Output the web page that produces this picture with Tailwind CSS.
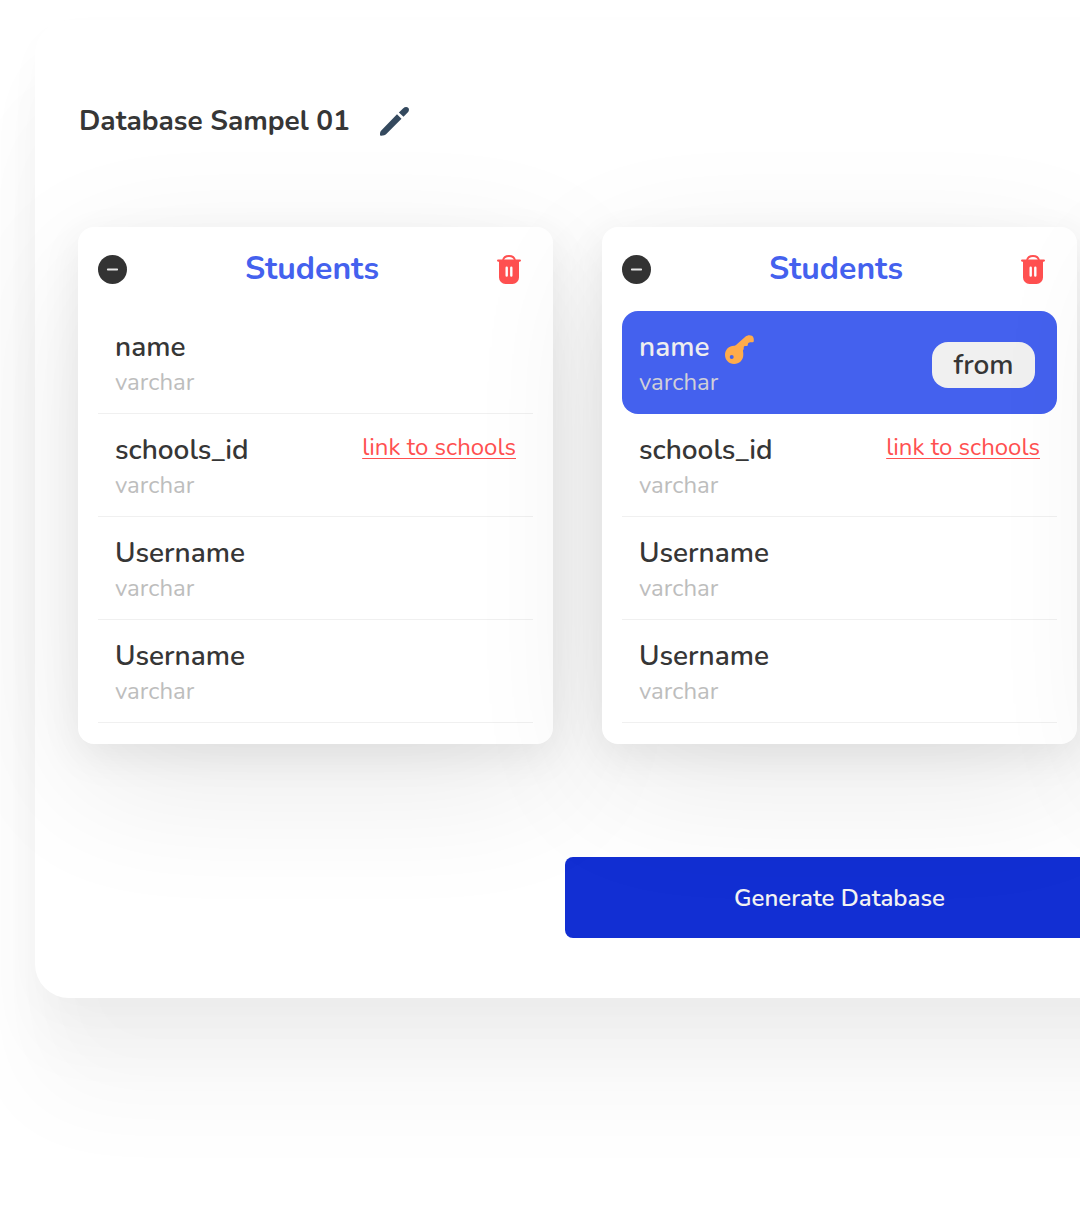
<!DOCTYPE html>
<html lang="en">
<head>
<meta charset="utf-8">
<meta name="viewport" content="width=device-width, initial-scale=1">
<title>Database Sampel 01</title>
<script src="https://cdn.jsdelivr.net/npm/@tailwindcss/browser@4"></script>
</head>
<body class="bg-white font-['Nunito','Lato',sans-serif] text-[#363636]">
<svg class="hidden" aria-hidden="true">
  <symbol id="minus" viewBox="0 0 28 28"><circle cx="14" cy="14" r="14" fill="#333"/><path d="M9.500 14h9" stroke="#e6e6e6" stroke-width="1.800" stroke-linecap="round"/></symbol>
  <symbol id="trash" viewBox="0 0 24 29"><path d="M6 5.500C6.500 2.500 9 1 12 1s5.500 1.500 6 4.500" fill="none" stroke="#ff5050" stroke-width="1.900"/><path d="M1.100 4.500h21.800a1.100 1.100 0 0 1 0 2.200H22V22.500a6.500 6.500 0 0 1-6.500 6.500h-7A6.500 6.500 0 0 1 2 22.500V6.700h-.9a1.100 1.100 0 0 1 0-2.200z" fill="#ff5050"/><path d="M9.700 12.800v7.700M14.300 12.800v7.700" stroke="#fff" stroke-width="2.400" stroke-linecap="round"/></symbol>
</svg>
<div class="overflow-x-hidden pt-5 pb-[232px] pl-[35px]">
  <main class="w-max rounded-[34px] bg-white px-[43px] pt-[81px] pb-[60px] shadow-[0_100px_100px_rgba(0,0,0,0.035),0_50px_60px_rgba(0,0,0,0.03),0_14px_40px_rgba(0,0,0,0.02)]">
    <header class="flex h-10 items-center gap-[30px] pl-px">
      <h1 class="text-[28px] leading-10 font-bold">Database Sampel 01</h1>
      <button type="button" aria-label="Rename database">
        <svg class="size-[29px]" viewBox="0 0 29 29" fill="#34495e"><path d="M17 7.300l4.500 4.400L6.300 27C5 28.300 3 28.800 0 28.600c-.1-2.700.2-4 1.500-5.300z"/><path d="M18.900 5.400L23 1.400C25 -.3 27.200-.2 28.400 1c.9 1.100.8 3-.7 4.500l-4.200 4.200z"/></svg>
      </button>
    </header>
    <div class="mt-[86px] flex gap-[49px]">
      <section class="w-[475px] rounded-2xl bg-white px-5 pt-5 pb-[21px] shadow-[0_40px_140px_rgba(0,0,0,0.09),0_12px_40px_rgba(0,0,0,0.07)]">
        <div class="flex h-11 items-center justify-between pr-3">
          <button type="button" aria-label="Collapse Students"><svg class="size-[29px]"><use href="#minus"/></svg></button>
          <h2 class="text-[32px] leading-11 font-bold text-[#4461ee]">Students</h2>
          <button type="button" aria-label="Delete Students"><svg class="h-[29px] w-6"><use href="#trash"/></svg></button>
        </div>
        <ul class="mt-5">
          <li class="h-[103px] border-b border-[#f0f0f0] px-[17px] pt-[17px]">
            <p class="text-[28px] leading-[38px] font-semibold">name</p><p class="text-2xl leading-8 text-[#bdbdbd]">varchar</p>
          </li>
          <li class="flex h-[103px] justify-between border-b border-[#f0f0f0] px-[17px] pt-[17px]">
            <div><p class="text-[28px] leading-[38px] font-semibold">schools_id</p><p class="text-2xl leading-8 text-[#bdbdbd]">varchar</p></div>
            <a href="#schools" class="text-2xl leading-8 text-[#ff5050] underline decoration-1 underline-offset-3">link to schools</a>
          </li>
          <li class="h-[103px] border-b border-[#f0f0f0] px-[17px] pt-[17px]">
            <p class="text-[28px] leading-[38px] font-semibold">Username</p><p class="text-2xl leading-8 text-[#bdbdbd]">varchar</p>
          </li>
          <li class="h-[103px] border-b border-[#f0f0f0] px-[17px] pt-[17px]">
            <p class="text-[28px] leading-[38px] font-semibold">Username</p><p class="text-2xl leading-8 text-[#bdbdbd]">varchar</p>
          </li>
        </ul>
      </section>
      <section class="w-[475px] rounded-2xl bg-white px-5 pt-5 pb-[21px] shadow-[0_40px_140px_rgba(0,0,0,0.09),0_12px_40px_rgba(0,0,0,0.07)]">
        <div class="flex h-11 items-center justify-between pr-3">
          <button type="button" aria-label="Collapse Students"><svg class="size-[29px]"><use href="#minus"/></svg></button>
          <h2 class="text-[32px] leading-11 font-bold text-[#4461ee]">Students</h2>
          <button type="button" aria-label="Delete Students"><svg class="h-[29px] w-6"><use href="#trash"/></svg></button>
        </div>
        <ul class="mt-5">
          <li class="flex h-[103px] items-start justify-between rounded-2xl bg-[#4461ee] px-[17px] pt-[17px]">
            <div>
              <div class="flex h-[38px] items-center gap-4">
                <p class="text-[28px] leading-[38px] font-semibold text-[#eeeeee]">name</p>
                <svg class="mt-1 size-[29px]" viewBox="0 0 29 29" role="img" aria-label="Primary key"><path fill="#ffac4b" fill-rule="evenodd" d="M9 10.700c1 0 1.400-.1 2-.7L20.300 1.700C22.300 0 25 -.3 27 .8c1.600.9 2 3 1.700 5.800-.2 1.200-1.500.6-2.700.6-1.200.1-2 .1-2.600.8-.8 1-.3 2.600-1.200 3-1 .3-2.300-.3-3.100.5-.8 1 0 2-.6 2.900-.5.700-.7 1-.5 1.800.3 1.300.3 2.200.3 3.500 0 5.300-4 9.300-9.200 9.300S0 25 0 19.800 4 10.700 9 10.700zM6.700 20a2 2 0 1 0 0 4 2 2 0 0 0 0-4z"/></svg>
              </div>
              <p class="text-2xl leading-8 text-[#d0d0d8]">varchar</p>
            </div>
            <button type="button" class="mt-3.5 mr-[5px] h-[46px] w-[103px] rounded-2xl bg-[#f0f0f0] text-[28px] leading-10 font-semibold">from</button>
          </li>
          <li class="flex h-[103px] justify-between border-b border-[#f0f0f0] px-[17px] pt-[17px]">
            <div><p class="text-[28px] leading-[38px] font-semibold">schools_id</p><p class="text-2xl leading-8 text-[#bdbdbd]">varchar</p></div>
            <a href="#schools" class="text-2xl leading-8 text-[#ff5050] underline decoration-1 underline-offset-3">link to schools</a>
          </li>
          <li class="h-[103px] border-b border-[#f0f0f0] px-[17px] pt-[17px]">
            <p class="text-[28px] leading-[38px] font-semibold">Username</p><p class="text-2xl leading-8 text-[#bdbdbd]">varchar</p>
          </li>
          <li class="h-[103px] border-b border-[#f0f0f0] px-[17px] pt-[17px]">
            <p class="text-[28px] leading-[38px] font-semibold">Username</p><p class="text-2xl leading-8 text-[#bdbdbd]">varchar</p>
          </li>
        </ul>
      </section>
      <!-- empty slot for the next table -->
      <section aria-label="New table" class="w-[475px] rounded-2xl bg-white shadow-[0_40px_140px_rgba(0,0,0,0.09),0_12px_40px_rgba(0,0,0,0.07)]"></section>
    </div>
    <button type="button" class="mx-auto mt-[113px] block h-[81px] w-[549px] rounded-lg bg-[#122fd3] text-2xl font-semibold text-[#f2f2f2]">Generate Database</button>
  </main>
</div>
</body>
</html>
